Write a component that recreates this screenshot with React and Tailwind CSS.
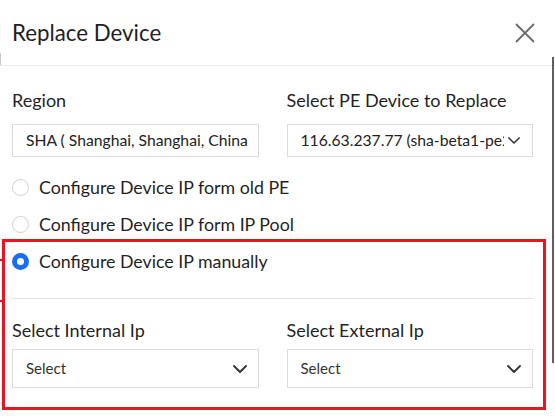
import React from "react";

const Chevron = ({ size = 14 }) => (
  <svg width={size} height={size / 2 + 1} viewBox="0 0 14 8" fill="none">
    <path d="M1 1l6 6 6-6" stroke="#333" strokeWidth="1.8" strokeLinecap="round" strokeLinejoin="round" />
  </svg>
);

const Radio = ({ checked, label }) => (
  <label className="flex items-center h-[37px] gap-[10px]">
    {checked ? (
      <span className="w-[17px] h-[17px] rounded-full border-[5px] border-[#1a6cf2] bg-white" />
    ) : (
      <span className="w-[17px] h-[17px] rounded-full border border-[#cfcfcf] bg-white" />
    )}
    <span className="text-[17.8px] text-[#1f1f1f] leading-none">{label}</span>
  </label>
);

const SelectBox = ({ text }) => (
  <div className="h-[39px] border border-[#d6dce3] flex items-center justify-between pl-[13px] pr-[11px]">
    <span className="text-[15px] text-[#333]">{text}</span>
    <Chevron />
  </div>
);

const App = () => {
  return (
    <div
      className="relative w-[555px] h-[419px] bg-white overflow-hidden"
      style={{ fontFamily: "Lato, 'Open Sans', sans-serif" }}
    >
      <div className="h-[66px] flex items-center justify-between pl-[12px] pr-[20px] border-b border-[#e8ebee]">
        <h1 className="text-[22.3px] text-[#1f1f1f]">Replace Device</h1>
        <svg width="20" height="20" viewBox="0 0 20 20">
          <path d="M1 1l18 18M19 1L1 19" stroke="#6b6b6b" strokeWidth="1.8" />
        </svg>
      </div>

      <div className="pl-[12px] pr-[22px]">
        <div className="grid grid-cols-2 gap-[28px] pt-[21px]">
          <div>
            <div className="text-[18px] text-[#1f1f1f] h-[26px] leading-[26px] mb-[11px]">Region</div>
            <div className="h-[33px] border border-[#d6dce3] flex items-center pl-[13px] overflow-hidden whitespace-nowrap">
              <span className="text-[15.7px] text-[#222]">SHA ( Shanghai, Shanghai, China</span>
            </div>
          </div>
          <div>
            <div className="text-[18px] text-[#1f1f1f] h-[26px] leading-[26px] mb-[11px]">Select PE Device to Replace</div>
            <div className="h-[33px] border border-[#d6dce3] flex items-center pl-[13px] pr-[12px] gap-[4px] whitespace-nowrap">
              <span className="text-[15.7px] text-[#222] overflow-hidden flex-1">116.63.237.77 (sha-beta1-pe2)</span>
              <Chevron size={12} />
            </div>
          </div>
        </div>

        <div className="mt-[12px]">
          <Radio label="Configure Device IP form old PE" />
          <Radio label="Configure Device IP form IP Pool" />
          <Radio checked label="Configure Device IP manually" />
        </div>

        <div className="mt-[18px] border-t border-[#dfe3e7]" />

        <div className="grid grid-cols-2 gap-[28px] pt-[18px]">
          <div>
            <div className="text-[18px] text-[#1f1f1f] h-[26px] leading-[26px] mb-[6px]">Select Internal Ip</div>
            <SelectBox text="Select" />
          </div>
          <div>
            <div className="text-[18px] text-[#1f1f1f] h-[26px] leading-[26px] mb-[6px]">Select External Ip</div>
            <SelectBox text="Select" />
          </div>
        </div>
      </div>

      {/* annotation overlay */}
      <div className="absolute left-[2px] top-[239px] w-[544px] h-[171px] border-[3px] border-[#e8141f]" />
      <div className="absolute left-0 top-[259px] w-[3px] h-[2px] bg-[#e8141f]" />
      <div className="absolute left-0 top-[300px] w-[3px] h-[2px] bg-[#e8141f]" />
      <div className="absolute right-[1px] top-[57px] w-[2px] h-[306px] bg-[#5f5f5f]" />
      <div className="absolute left-0 top-[53px] w-[1px] h-[12px] bg-[#c8c8c8]" />
    </div>
  );
};

export default App;
